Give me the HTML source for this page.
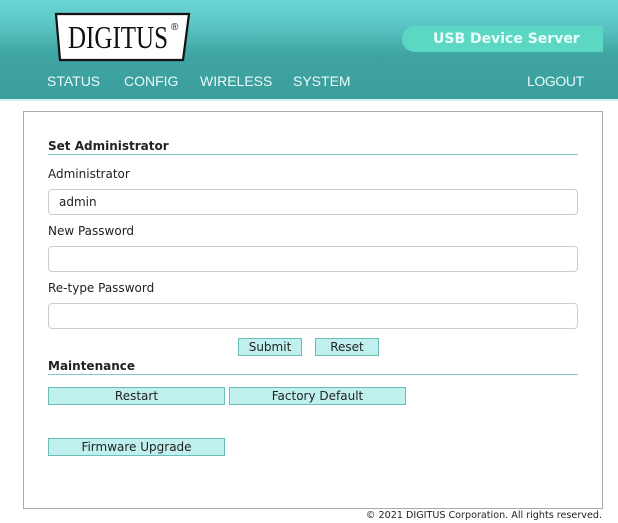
<!DOCTYPE html>
<html><head><meta charset="utf-8"><style>
*{margin:0;padding:0;box-sizing:border-box}
body{width:618px;height:523px;background:#fff;font-family:"DejaVu Sans","Liberation Sans",sans-serif;position:relative;overflow:hidden;color:#222}
.hdr{position:absolute;left:0;top:0;width:618px;height:101px;background:linear-gradient(#6ad6d4 0px,#5cc6c4 25px,#3fa4a2 55px,#3a9e9c 101px);border-bottom:2px solid #d8efef}
.logo{position:absolute;left:0;top:0}
.pill{position:absolute;left:402px;top:26px;width:201px;height:26px;background:#5cd7c4;border-radius:13px 0 0 13px;color:#e8fffb;font-weight:bold;font-size:14px;line-height:26px;padding-left:31px}
.nav{position:absolute;top:73px;color:#eafafa;font-size:14px;font-family:"Liberation Sans",sans-serif}
.panel{position:absolute;left:23px;top:111px;width:580px;height:398px;border:1px solid #aaa}
.h{position:absolute;left:48px;font-weight:bold;font-size:12px;width:530px;border-bottom:1px solid #7ccbc6;padding-bottom:1px}
.lbl{position:absolute;left:48px;font-size:12px}
.inp{position:absolute;left:48px;width:530px;height:26px;border:1px solid #ccc;border-radius:4px;font-size:12px;padding-left:10px;line-height:24px}
.btn{position:absolute;height:18px;background:#bff0ee;border:1px solid #6cbcb8;font-size:12px;text-align:center;line-height:16px}
.foot{position:absolute;right:16px;top:510px;font-size:9.6px}
</style></head><body>
<div class="hdr">
<svg class="logo" width="200" height="70">
<polygon points="56,14 189,14 183,60 60,60" fill="#fff" stroke="#111" stroke-width="2.2"/>
<text x="68" y="48" font-family="Liberation Serif,serif" font-size="32" fill="#111" textLength="100" lengthAdjust="spacingAndGlyphs">DIGITUS</text>
<text x="171" y="30" font-family="Liberation Sans,sans-serif" font-size="10" fill="#111">®</text>
</svg>
<div class="pill">USB Device Server</div>
<div class="nav" style="left:47px">STATUS</div>
<div class="nav" style="left:124px">CONFIG</div>
<div class="nav" style="left:200px">WIRELESS</div>
<div class="nav" style="left:293px">SYSTEM</div>
<div class="nav" style="left:527px;letter-spacing:-0.4px">LOGOUT</div>
</div>
<div class="panel"></div>
<div class="h" style="top:139px">Set Administrator</div>
<div class="lbl" style="top:167px">Administrator</div>
<div class="inp" style="top:189px">admin</div>
<div class="lbl" style="top:224px">New Password</div>
<div class="inp" style="top:246px"></div>
<div class="lbl" style="top:281px">Re-type Password</div>
<div class="inp" style="top:303px"></div>
<div class="btn" style="left:238px;top:338px;width:64px">Submit</div>
<div class="btn" style="left:315px;top:338px;width:64px">Reset</div>
<div class="h" style="top:359px">Maintenance</div>
<div class="btn" style="left:48px;top:387px;width:177px">Restart</div>
<div class="btn" style="left:229px;top:387px;width:177px">Factory Default</div>
<div class="btn" style="left:48px;top:438px;width:177px">Firmware Upgrade</div>
<div class="foot">© 2021 DIGITUS Corporation. All rights reserved.</div>
</body></html>
